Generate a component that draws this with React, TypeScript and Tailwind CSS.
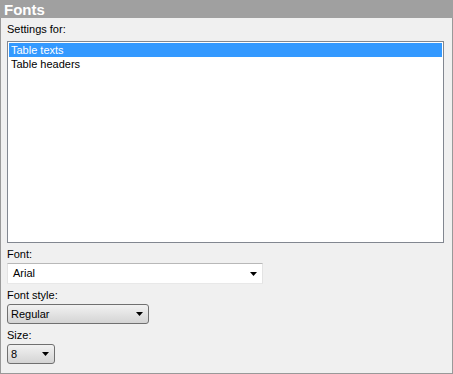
import React from "react";

function Arrow() {
  return (
    <svg width="7" height="4" viewBox="0 0 7 4" className="block">
      <path d="M0 0H7L3.5 4Z" fill="#000" />
    </svg>
  );
}

export default function App() {
  return (
    <div
      className="w-[453px] h-[374px] bg-[#f0f0f0] text-[11px] text-black flex flex-col"
      style={{ fontFamily: '"Liberation Sans", Arial, sans-serif' }}
    >
      <div className="h-[18px] bg-[#a0a0a0] flex items-center pl-[4px] shrink-0">
        <span className="text-white font-bold text-[15px] leading-none">Fonts</span>
      </div>
      <div className="flex-1 border-l border-r border-b border-[#999999] flex flex-col pl-[6px] pr-[8px]">
        <div className="mt-[5px] h-[13px] leading-[13px]">Settings for:</div>
        <div className="mt-[5px] h-[202px] bg-white border border-[#828790] p-[1px] flex flex-col">
          <div className="h-[14px] leading-[14px] bg-[#3399ff] text-white pl-[2px]">Table texts</div>
          <div className="h-[14px] leading-[14px] pl-[2px]">Table headers</div>
        </div>
        <div className="mt-[5px] h-[13px] leading-[13px]">Font:</div>
        <div className="mt-[2px] w-[256px] h-[21px] bg-white border-t border-[#b8b8b8] border-l border-l-[#e3e3e3] border-r border-r-[#e3e3e3] border-b border-b-[#e8e8e8] flex items-center justify-between pl-[5px] pr-[5px]">
          <span>Arial</span>
          <Arrow />
        </div>
        <div className="mt-[5px] h-[13px] leading-[13px]">Font style:</div>
        <div className="mt-[2px] w-[142px] h-[20px] rounded-[3px] border border-[#707070] bg-gradient-to-b from-[#f2f2f2] to-[#d4d4d4] flex items-center justify-between pl-[3px] pr-[5px]">
          <span>Regular</span>
          <Arrow />
        </div>
        <div className="mt-[5px] h-[13px] leading-[13px]">Size:</div>
        <div className="mt-[2px] w-[48px] h-[20px] rounded-[3px] border border-[#707070] bg-gradient-to-b from-[#f2f2f2] to-[#d4d4d4] flex items-center justify-between pl-[3px] pr-[5px]">
          <span>8</span>
          <Arrow />
        </div>
      </div>
    </div>
  );
}
